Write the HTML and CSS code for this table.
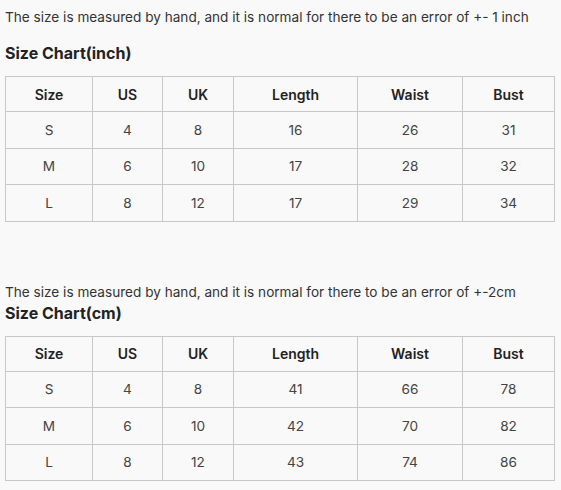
FILE: index.html
```html
<!DOCTYPE html>
<html>
<head>
<meta charset="utf-8">
<link rel="stylesheet" href="styles.css">
</head>
<body>
<div class="page">
  <section class="chart chart-inch">
    <p class="note">The size is measured by hand, and it is normal for there to be an error of +- 1 inch</p>
    <h2 class="title">Size Chart(inch)</h2>
    <table class="size-table">
      <colgroup><col class="c1"><col class="c2"><col class="c3"><col class="c4"><col class="c5"><col class="c6"></colgroup>
      <thead><tr><th>Size</th><th>US</th><th>UK</th><th>Length</th><th>Waist</th><th>Bust</th></tr></thead>
      <tbody>
        <tr><td>S</td><td>4</td><td>8</td><td>16</td><td>26</td><td>31</td></tr>
        <tr><td>M</td><td>6</td><td>10</td><td>17</td><td>28</td><td>32</td></tr>
        <tr><td>L</td><td>8</td><td>12</td><td>17</td><td>29</td><td>34</td></tr>
      </tbody>
    </table>
  </section>
  <section class="chart chart-cm">
    <p class="note">The size is measured by hand, and it is normal for there to be an error of +-2cm</p>
    <h2 class="title tight">Size Chart(cm)</h2>
    <table class="size-table">
      <colgroup><col class="c1"><col class="c2"><col class="c3"><col class="c4"><col class="c5"><col class="c6"></colgroup>
      <thead><tr><th>Size</th><th>US</th><th>UK</th><th>Length</th><th>Waist</th><th>Bust</th></tr></thead>
      <tbody>
        <tr><td>S</td><td>4</td><td>8</td><td>41</td><td>66</td><td>78</td></tr>
        <tr><td>M</td><td>6</td><td>10</td><td>42</td><td>70</td><td>82</td></tr>
        <tr><td>L</td><td>8</td><td>12</td><td>43</td><td>74</td><td>86</td></tr>
      </tbody>
    </table>
  </section>
</div>
</body>
</html>
```
FILE: styles.css
```css
html, body {
  margin: 0;
  padding: 0;
  background: #f9f9f9;
}
body {
  font-family: Inter, "Noto Sans", sans-serif;
  color: #333;
}
.page {
  padding: 7px 5px 0 5px;
}
.note {
  margin: 0;
  font-size: 13.6px;
  line-height: 20px;
  color: #333;
}
.title {
  margin: 15px 0 12px 0;
  font-size: 16px;
  line-height: 22px;
  font-weight: 700;
  color: #222;
}
.title.tight {
  margin-top: 0;
  margin-bottom: 12px;
}
.chart-cm {
  margin-top: 60px;
}
.size-table {
  border-collapse: collapse;
  width: 549px;
  table-layout: fixed;
  font-size: 14px;
}
.c1 { width: 87px; }
.c2 { width: 70px; }
.c3 { width: 71px; }
.c4 { width: 124px; }
.c5 { width: 105px; }
.c6 { width: 92px; }
.size-table th, .size-table td {
  border: 1px solid #c8c8c8;
  text-align: center;
  padding: 0;
}
.size-table th {
  height: 34px;
  font-weight: 600;
  color: #222;
}
.size-table td {
  height: 35.5px;
  font-size: 13.6px;
  color: #444;
}
```
